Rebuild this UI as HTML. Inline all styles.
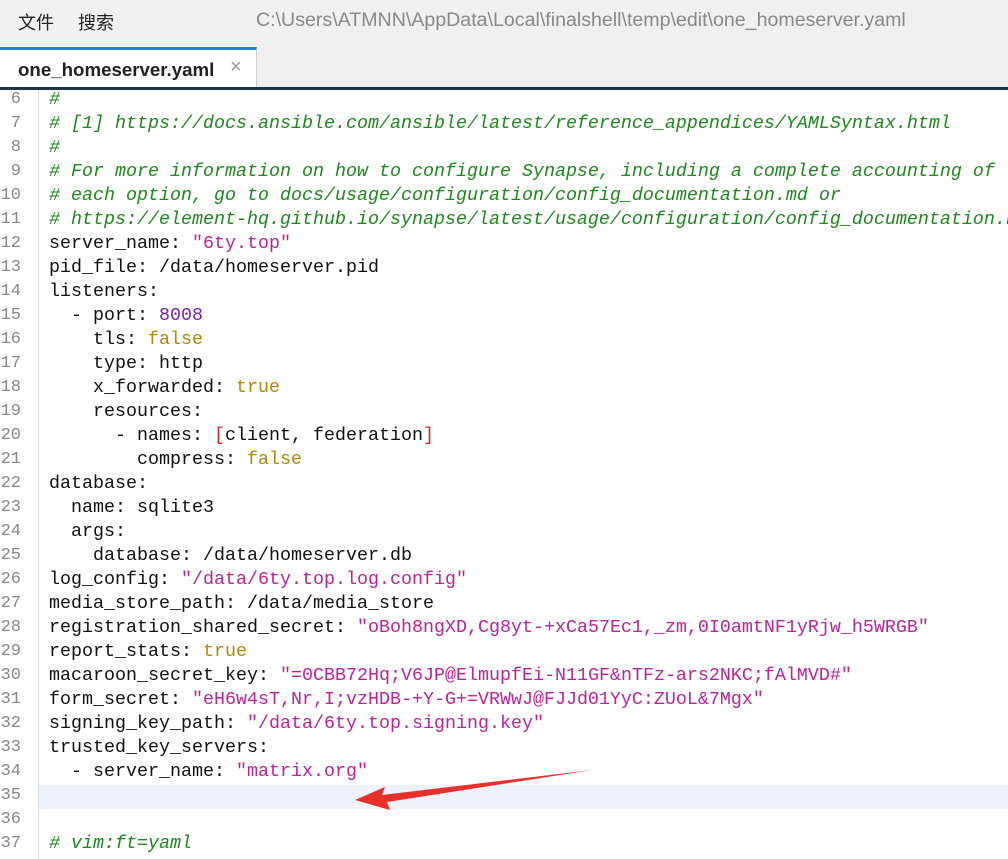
<!DOCTYPE html>
<html><head><meta charset="utf-8"><style>
body{margin:0;width:1008px;height:859px;overflow:hidden;background:#fff;position:relative;font-family:"Liberation Sans","Noto Sans CJK SC",sans-serif}
.top{position:absolute;left:0;top:0;width:1008px;height:88px;background:#f0f0f0}
.menu{position:absolute;top:9px;font-size:18px;color:#222}
.path{position:absolute;left:256px;top:9px;font-size:19.6px;color:#888;white-space:nowrap}
.tab{position:absolute;left:0;top:47px;width:257px;height:41px;background:#fff;border-top:3px solid #2b7fd6;border-right:1px solid #ccc;box-sizing:border-box}
.tab span{position:absolute;left:18px;top:9px;font-size:18.7px;font-weight:bold;color:#222}
.tab i{position:absolute;left:230px;top:6px;font-style:normal;font-size:20px;color:#999}
.bar{position:absolute;left:0;top:87px;width:1008px;height:3px;background:#1e3448}
.gut{position:absolute;left:38px;top:90px;width:1px;height:769px;background:#ddd}
.hl{position:absolute;left:39px;top:785px;width:969px;height:24px;background:#eef2fb}
.code{position:absolute;left:49px;top:88px;font-family:"Liberation Mono",monospace;font-size:18.33px;line-height:24px;white-space:pre;color:#111}
.nums{position:absolute;left:0;top:88px;width:21px;text-align:right;font-family:"Liberation Mono",monospace;font-size:17px;line-height:24px;color:#888;white-space:pre}
.c{color:#1a8a1a;font-style:italic}.s{color:#c0209a}.n{color:#7a1fb0}.b{color:#b08a00}.r{color:#e02020}
</style></head><body>
<div class="top"></div>
<div class="menu" style="left:18px">文件</div><div class="menu" style="left:78px">搜索</div>
<div class="path">C:\Users\ATMNN\AppData\Local\finalshell\temp\edit\one_homeserver.yaml</div>
<div class="tab"><span>one_homeserver.yaml</span><i>×</i></div>
<div class="hl"></div>
<div class="gut"></div>
<div class="nums">6
7
8
9
10
11
12
13
14
15
16
17
18
19
20
21
22
23
24
25
26
27
28
29
30
31
32
33
34
35
36
37</div>
<div class="code"><span class="c">#</span>
<span class="c"># [1] https://docs.ansible.com/ansible/latest/reference_appendices/YAMLSyntax.html</span>
<span class="c">#</span>
<span class="c"># For more information on how to configure Synapse, including a complete accounting of</span>
<span class="c"># each option, go to docs/usage/configuration/config_documentation.md or</span>
<span class="c"># https://element-hq.github.io/synapse/latest/usage/configuration/config_documentation.html</span>
server_name: <span class="s">"6ty.top"</span>
pid_file: /data/homeserver.pid
listeners:
  - port: <span class="n">8008</span>
    tls: <span class="b">false</span>
    type: http
    x_forwarded: <span class="b">true</span>
    resources:
      - names: <span class="r">[</span>client, federation<span class="r">]</span>
        compress: <span class="b">false</span>
database:
  name: sqlite3
  args:
    database: /data/homeserver.db
log_config: <span class="s">"/data/6ty.top.log.config"</span>
media_store_path: /data/media_store
registration_shared_secret: <span class="s">"oBoh8ngXD,Cg8yt-+xCa57Ec1,_zm,0I0amtNF1yRjw_h5WRGB"</span>
report_stats: <span class="b">true</span>
macaroon_secret_key: <span class="s">"=0CBB72Hq;V6JP@ElmupfEi-N11GF&amp;nTFz-ars2NKC;fAlMVD#"</span>
form_secret: <span class="s">"eH6w4sT,Nr,I;vzHDB-+Y-G+=VRWwJ@FJJd01YyC:ZUoL&amp;7Mgx"</span>
signing_key_path: <span class="s">"/data/6ty.top.signing.key"</span>
trusted_key_servers:
  - server_name: <span class="s">"matrix.org"</span>


<span class="c"># vim:ft=yaml</span></div>
<div class="bar"></div>
<svg style="position:absolute;left:0;top:0" width="1008" height="859"><polygon points="592,770 382,795 385,787 355,800 390,810 387,802" fill="#e8302a"/></svg>
</body></html>
